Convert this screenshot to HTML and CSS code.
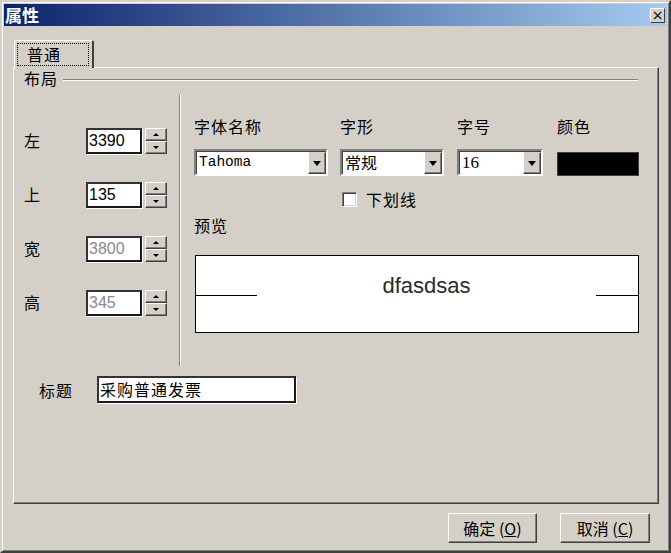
FILE: index.html
```html
<!DOCTYPE html>
<html lang="zh">

<head>
    <meta charset="UTF-8">
    <title>属性</title>
    <link rel="stylesheet" href="styles.css">
</head>

<body>
    <div class="window">
        <div class="titlebar">
            <span class="title">属性</span>
            <span class="close">×</span>
        </div>

        <div class="tabs">
            <div class="tab"><span class="tab-focus">普通</span></div>
        </div>

        <div class="panel">
            <div class="legend">
                <span>布局</span>
                <div class="legend-line"></div>
            </div>

            <div class="body-row">
                <div class="pos-col">
                    <div class="pos-row">
                        <label>左</label>
                        <div class="field">3390</div>
                        <div class="spin">
                            <div class="spin-btn"><i class="tri-up"></i></div>
                            <div class="spin-btn"><i class="tri-down"></i></div>
                        </div>
                    </div>
                    <div class="pos-row">
                        <label>上</label>
                        <div class="field">135</div>
                        <div class="spin">
                            <div class="spin-btn"><i class="tri-up"></i></div>
                            <div class="spin-btn"><i class="tri-down"></i></div>
                        </div>
                    </div>
                    <div class="pos-row">
                        <label>宽</label>
                        <div class="field disabled">3800</div>
                        <div class="spin">
                            <div class="spin-btn"><i class="tri-up"></i></div>
                            <div class="spin-btn"><i class="tri-down"></i></div>
                        </div>
                    </div>
                    <div class="pos-row">
                        <label>高</label>
                        <div class="field disabled">345</div>
                        <div class="spin">
                            <div class="spin-btn"><i class="tri-up"></i></div>
                            <div class="spin-btn"><i class="tri-down"></i></div>
                        </div>
                    </div>
                </div>

                <div class="separator"></div>

                <div class="font-col">
                    <div class="font-grid">
                        <span class="lbl">字体名称</span>
                        <span class="lbl">字形</span>
                        <span class="lbl">字号</span>
                        <span class="lbl">颜色</span>

                        <div class="combo combo-name">
                            <span class="combo-text mono">Tahoma</span>
                            <span class="combo-btn"><i class="tri-down big"></i></span>
                        </div>
                        <div class="combo combo-style">
                            <span class="combo-text">常规</span>
                            <span class="combo-btn"><i class="tri-down big"></i></span>
                        </div>
                        <div class="combo combo-size">
                            <span class="combo-text serif">16</span>
                            <span class="combo-btn"><i class="tri-down big"></i></span>
                        </div>
                        <div class="color-box"></div>

                        <span></span>
                        <div class="check-row">
                            <span class="checkbox"></span>
                            <span>下划线</span>
                        </div>
                    </div>

                    <div class="lbl preview-lbl">预览</div>
                    <div class="preview">
                        <span class="pv-line pv-left"></span>
                        <span class="pv-text">dfasdsas</span>
                        <span class="pv-line pv-right"></span>
                    </div>
                </div>
            </div>

            <div class="caption-row">
                <label>标题</label>
                <div class="field caption-field">采购普通发票</div>
            </div>
        </div>

        <div class="buttons">
            <button class="btn">确定 (<u>O</u>)</button>
            <button class="btn">取消 (<u>C</u>)</button>
        </div>
    </div>
</body>

</html>
```

FILE: styles.css
```css
* {
    box-sizing: border-box;
}

body {
    margin: 0;
    background: #d4d0c8;
    font-family: "Noto Sans CJK SC", sans-serif;
    font-size: 16px;
    color: #000;
}

.window {
    width: 671px;
    height: 553px;
    padding: 2px;
    border: 2px solid;
    border-color: #d4d0c8 #404040 #404040 #d4d0c8;
    box-shadow: inset 1px 1px #fff, inset -1px -1px #808080;
    background: #d4d0c8;
}

.titlebar {
    height: 22px;
    display: flex;
    align-items: center;
    justify-content: space-between;
    padding: 0 2px 0 1px;
    background: linear-gradient(90deg, #0a246a, #a6caf0);
}

.title {
    color: #fff;
    font-weight: bold;
    font-size: 17px;
    line-height: 22px;
}

.close {
    width: 15px;
    height: 15px;
    background: #d4d0c8;
    border: 1px solid;
    border-color: #fff #404040 #404040 #fff;
    font-family: "DejaVu Sans", sans-serif;
    font-size: 14px;
    line-height: 12px;
    text-align: center;
    color: #000;
}

/* tab strip */
.tabs {
    display: flex;
    padding: 14px 0 0 10px;
}

.tab {
    width: 80px;
    height: 28px;
    padding: 2px 3px 0 2px;
    border-top: 1px solid #fff;
    border-left: 1px solid #fff;
    border-right: 2px solid #404040;
    border-radius: 2px 2px 0 0;
    position: relative;
    z-index: 1;
    margin-bottom: -1px;
    background: #d4d0c8;
}

.tab-focus {
    display: block;
    height: 23px;
    border: 1px dotted #000;
    padding-left: 9px;
    line-height: 20px;
    letter-spacing: 1px;
}

.panel {
    margin-left: 9px;
    width: 646px;
    height: 437px;
    border-left: 1px solid #fff;
    border-top: 1px solid #fff;
    border-right: 1px solid #404040;
    border-bottom: 1px solid #404040;
    box-shadow: inset -1px -1px #808080;
}

.legend {
    display: flex;
    align-items: center;
    height: 20px;
    padding-left: 10px;
    padding-right: 20px;
    letter-spacing: 1px;
}

.legend-line {
    flex: 1;
    height: 2px;
    margin: 3px 0 0 5px;
    border-top: 1px solid #808080;
    border-bottom: 1px solid #fff;
}

.body-row {
    display: flex;
    height: 271px;
    margin-top: 7px;
}

.pos-col {
    width: 165px;
    padding: 33px 0 0 10px;
    display: flex;
    flex-direction: column;
    gap: 28px;
}

.pos-row {
    display: flex;
    align-items: center;
    height: 26px;
}

.pos-row label {
    width: 62px;
    margin-top: -3px;
}

.field {
    width: 56px;
    height: 26px;
    background: #fff;
    border: 2px solid;
    border-color: #333 #1a1a1a #1a1a1a #333;
    box-shadow: 1px 1px #fff;
    font-family: "Liberation Sans", sans-serif;
    font-size: 16px;
    line-height: 22px;
    padding-left: 1px;
}

.field.disabled {
    color: #8a8a8a;
}

.spin {
    margin-left: 3px;
    width: 22px;
    height: 26px;
    display: flex;
    flex-direction: column;
}

.spin-btn {
    flex: 1;
    display: flex;
    align-items: center;
    justify-content: center;
    border: 1px solid;
    border-color: #fff #404040 #404040 #fff;
    box-shadow: inset -1px -1px #808080;
}

.tri-up,
.tri-down {
    display: block;
    width: 0;
    height: 0;
    border-left: 3px solid transparent;
    border-right: 3px solid transparent;
}

.tri-up {
    border-bottom: 3px solid #000;
}

.tri-down {
    border-top: 3px solid #000;
}

.tri-down.big {
    border-left-width: 4px;
    border-right-width: 4px;
    border-top-width: 5px;
}

.separator {
    width: 2px;
    border-left: 1px solid #808080;
    border-right: 1px solid #fff;
}

.font-col {
    flex: 1;
    padding: 21px 0 0 13px;
}

.font-grid {
    display: grid;
    grid-template-columns: 146px 117px 100px 82px;
    grid-template-rows: 20px 27px 20px;
    row-gap: 13px;
}

.font-grid .check-row {
    margin-top: 0;
}

.lbl {
    line-height: 20px;
    letter-spacing: 1px;
}

.combo {
    height: 27px;
    display: flex;
    background: #fff;
    border: 2px solid;
    border-color: #808080 #fff #fff #808080;
    box-shadow: inset 1px 1px #404040;
}

.combo-name {
    width: 134px;
}

.combo-style {
    width: 104px;
}

.combo-size {
    width: 86px;
}

.combo-text {
    flex: 1;
    padding: 1px 0 0 3px;
    line-height: 21px;
    white-space: nowrap;
}

.mono {
    font-family: "Liberation Mono", monospace;
    font-size: 14.5px;
}

.serif {
    font-family: "Liberation Serif", serif;
    font-size: 17px;
}

.combo-btn {
    width: 18px;
    margin: 1px 0 0 0;
    display: flex;
    align-items: center;
    justify-content: center;
    background: #d4d0c8;
    border: 1px solid;
    border-color: #d4d0c8 #404040 #404040 #fff;
    box-shadow: inset -1px -1px #808080;
}

.color-box {
    align-self: end;
    width: 82px;
    height: 24px;
    background: #000;
    border: 1px solid #404040;
}

.check-row {
    display: flex;
    align-items: center;
    gap: 9px;
    padding-left: 2px;
    letter-spacing: 1px;
    line-height: 20px;
}

.checkbox {
    width: 15px;
    height: 15px;
    background: #fff;
    border: 1px solid;
    border-color: #808080 #fff #fff #808080;
    box-shadow: inset 1px 1px #404040, inset -1px -1px #d4d0c8;
}

.preview-lbl {
    margin-top: 6px;
}

.preview {
    margin: 20px 0 0 1px;
    width: 444px;
    height: 78px;
    background: #fff;
    border: 1px solid #000;
    display: flex;
    align-items: center;
}

.pv-line {
    height: 1px;
    background: #000;
    margin-top: 2px;
}

.pv-left {
    width: 61px;
}

.pv-right {
    width: 42px;
}

.pv-text {
    flex: 1;
    text-align: center;
    margin-bottom: 16px;
    font-family: "Liberation Sans", sans-serif;
    font-size: 22px;
    color: #2a2a2a;
}

.caption-row {
    display: flex;
    align-items: center;
    margin-top: 10px;
    padding-left: 25px;
}

.caption-row label {
    width: 58px;
    letter-spacing: 1px;
}

.caption-field {
    width: 199px;
    height: 27px;
    font-family: "Noto Sans CJK SC", sans-serif;
    letter-spacing: 1px;
    padding-left: 1px;
}

.buttons {
    display: flex;
    justify-content: flex-end;
    gap: 23px;
    padding: 9px 17px 0 0;
}

.btn {
    width: 89px;
    height: 30px;
    background: #d4d0c8;
    border: 1px solid;
    border-color: #fff #404040 #404040 #fff;
    box-shadow: inset -1px -1px #808080;
    font-family: "Noto Sans CJK SC", sans-serif;
    font-size: 16px;
    padding: 0;
    color: #000;
}

.btn + .btn {
    width: 90px;
}
```
